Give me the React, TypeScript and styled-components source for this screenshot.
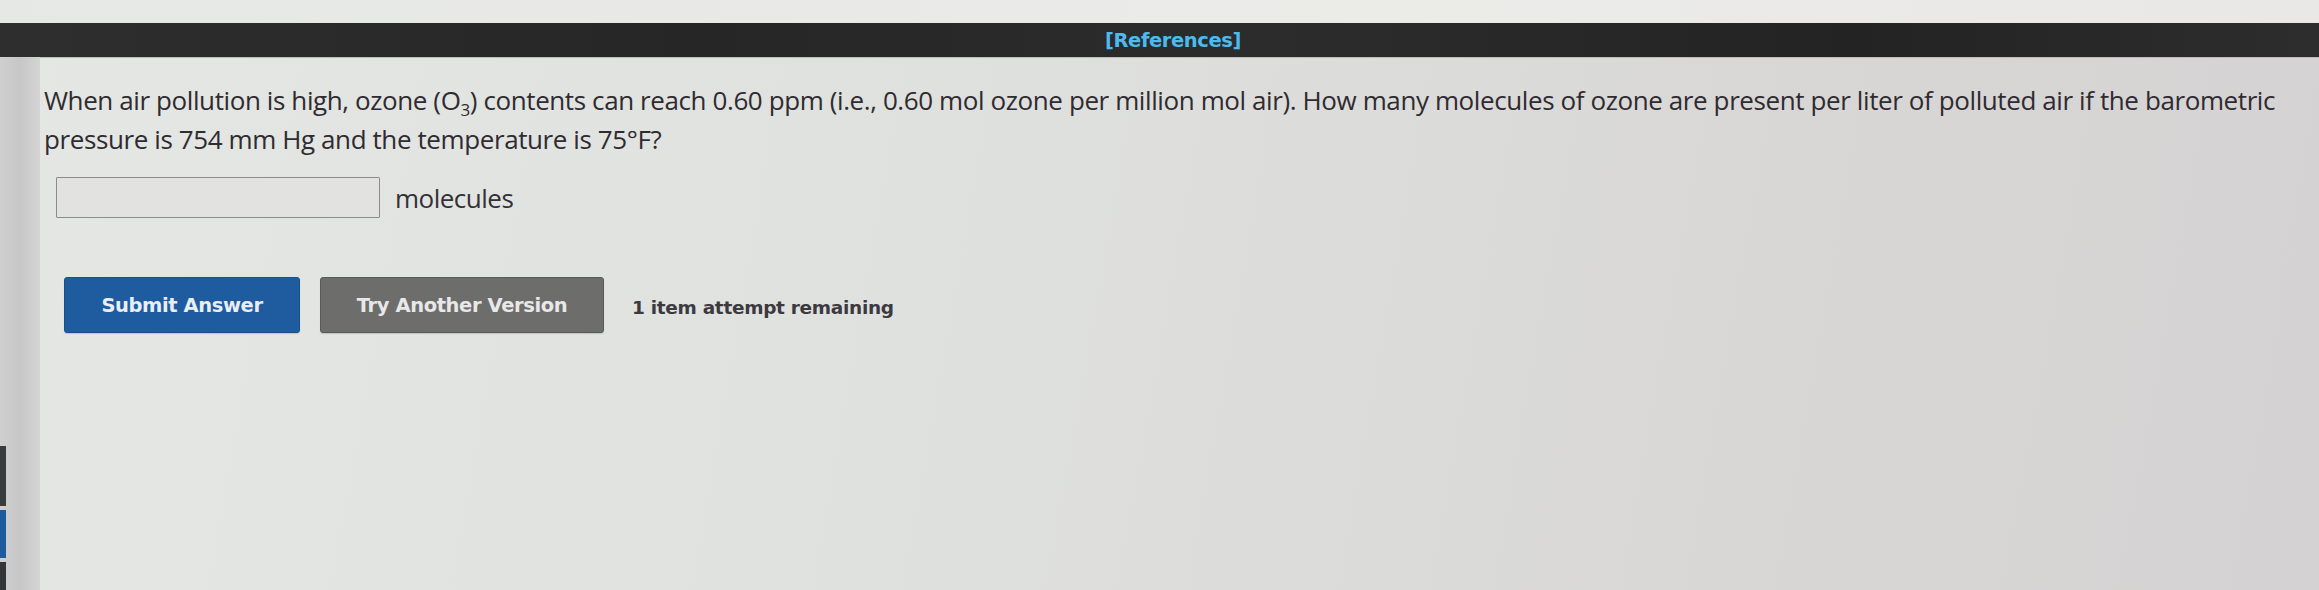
import React from "react";
import styled, { createGlobalStyle } from "styled-components";

const Global = createGlobalStyle`
  html, body { margin: 0; padding: 0; }
  body {
    width: 2319px;
    height: 590px;
    overflow: hidden;
    background: #d8d8d6;
  }
`;

const Page = styled.div`
  width: 2319px;
  height: 590px;
  display: flex;
  flex-direction: column;
  background: linear-gradient(100deg, #e4e7e4 0%, #dfe1df 40%, #d8d7d6 75%, #d4d2d2 100%);
`;

const TopStrip = styled.div`
  height: 23px;
  background: linear-gradient(90deg, #e6e8e5 0%, #ebebe8 60%, #e9e8e6 100%);
`;

const RefBar = styled.div`
  height: 34px;
  display: flex;
  align-items: center;
  justify-content: center;
  padding-left: 27px;
  background: linear-gradient(90deg, #2e2e2e 0%, #262626 30%, #2c2c2c 55%, #232323 80%, #2d2d2d 100%);
  box-shadow: 0 1px 0 #bdbdbd;
`;

const RefLink = styled.span`
  font-family: "DejaVu Sans", Roboto, sans-serif;
  font-weight: 700;
  font-size: 19.5px;
  letter-spacing: -0.4px;
  color: #4cbbec;
`;

const Body = styled.div`
  flex: 1;
  display: flex;
`;

const Rail = styled.div`
  width: 40px;
  display: flex;
  background: linear-gradient(90deg, #cfcfcf 0%, #c7c7c7 50%, #d4d4d4 100%);
`;

const RailEdge = styled.div`
  width: 6px;
  display: flex;
  flex-direction: column;
  justify-content: flex-end;
`;

const RailChip = styled.div<{ $color: string; $h: number }>`
  height: ${(p) => p.$h}px;
  background: ${(p) => p.$color};
  margin-top: 4px;
`;

const Content = styled.div`
  flex: 1;
  padding-top: 24px;
  margin-left: 4px;
`;

const Question = styled.p`
  margin: 0;
  font-family: "Open Sans", "Noto Sans", sans-serif;
  font-size: 26px;
  line-height: 39px;
  letter-spacing: -0.4px;
  color: #2f2b30;
  white-space: nowrap;
`;

const Sub = styled.sub`
  font-size: 17px;
  line-height: 0;
`;

const AnswerRow = styled.div`
  display: flex;
  align-items: center;
  gap: 15px;
  margin-top: 18px;
  margin-left: 12px;
`;

const AnswerInput = styled.input`
  width: 324px;
  height: 41px;
  box-sizing: border-box;
  border: 1.5px solid #8c8c8b;
  border-radius: 1px;
  background: #e2e3e1;
  outline: none;
`;

const Unit = styled.span`
  font-family: "Open Sans", "Noto Sans", sans-serif;
  font-size: 26px;
  letter-spacing: -0.5px;
  color: #343036;
`;

const ActionRow = styled.div`
  display: flex;
  align-items: center;
  margin-top: 59px;
  margin-left: 20px;
`;

const Button = styled.button<{ $variant: "primary" | "secondary"; $w: number }>`
  width: ${(p) => p.$w}px;
  height: 56px;
  margin-right: ${(p) => (p.$variant === "primary" ? 20 : 28)}px;
  border-radius: 3px;
  border: 1px solid ${(p) => (p.$variant === "primary" ? "#1b4f8c" : "#5a5a5a")};
  background: ${(p) => (p.$variant === "primary" ? "#1e5b9f" : "#6d6d6c")};
  color: ${(p) => (p.$variant === "primary" ? "#e9eef6" : "#e8e8e8")};
  font-family: "DejaVu Sans", Roboto, sans-serif;
  font-weight: 700;
  font-size: 19.5px;
  letter-spacing: -0.4px;
  display: flex;
  align-items: center;
  justify-content: center;
  box-shadow: 0 1px 1px rgba(0, 0, 0, 0.15);
  padding: 0;
`;

const Attempts = styled.span`
  font-family: "DejaVu Sans", Roboto, sans-serif;
  font-weight: 700;
  font-size: 18.5px;
  letter-spacing: -0.3px;
  color: #3d3a3f;
  padding-top: 5px;
`;

export default function App() {
  return (
    <>
      <Global />
      <Page>
        <TopStrip />
        <RefBar>
          <RefLink>[References]</RefLink>
        </RefBar>
        <Body>
          <Rail>
            <RailEdge>
              <RailChip $color="#3a3b3c" $h={60} />
              <RailChip $color="#1f5a9c" $h={48} />
              <RailChip $color="#343536" $h={28} />
            </RailEdge>
          </Rail>
          <Content>
            <Question>
              When air pollution is high, ozone (O<Sub>3</Sub>) contents can reach 0.60 ppm (i.e., 0.60 mol ozone per
              million mol air). How many molecules of ozone are present per liter of polluted air if the barometric
              <br />
              pressure is 754 mm Hg and the temperature is 75°F?
            </Question>
            <AnswerRow>
              <AnswerInput type="text" aria-label="answer" />
              <Unit>molecules</Unit>
            </AnswerRow>
            <ActionRow>
              <Button $variant="primary" $w={236}>Submit Answer</Button>
              <Button $variant="secondary" $w={284}>Try Another Version</Button>
              <Attempts>1 item attempt remaining</Attempts>
            </ActionRow>
          </Content>
        </Body>
      </Page>
    </>
  );
}
